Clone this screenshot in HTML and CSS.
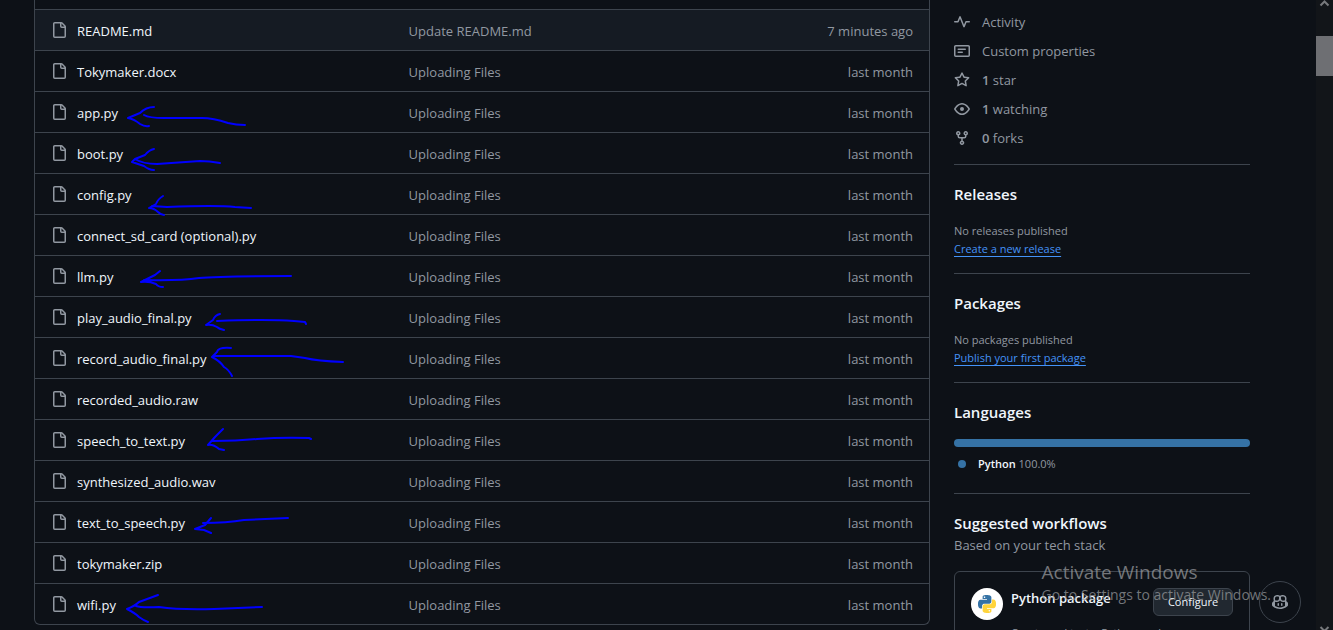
FILE: index.html
```html
<!DOCTYPE html>
<html lang="en">
<head>
<meta charset="utf-8">
<title>Repository files</title>
<link rel="stylesheet" href="styles.css">
</head>
<body>
<svg class="symbols" aria-hidden="true">
  <symbol id="file" viewBox="0 0 16 16"><path d="M2 1.75C2 .784 2.784 0 3.75 0h6.586c.464 0 .909.184 1.237.513l2.914 2.914c.329.328.513.773.513 1.237v9.586A1.75 1.75 0 0 1 13.25 16h-9.5A1.75 1.75 0 0 1 2 14.25Zm1.75-.25a.25.25 0 0 0-.25.25v12.500c0 .138.112.25.25.25h9.500a.25.25 0 0 0 .25-.25V6h-2.750A1.75 1.75 0 0 1 9 4.250V1.500Zm6.750.062V4.250c0 .138.112.25.25.25h2.688l-.011-.013-2.914-2.914-.013-.011Z"/></symbol>
</svg>
<div class="window">
  <div class="page">
    <main class="files">
      <table class="file-table">
        <colgroup><col class="col-name"><col class="col-message"><col class="col-age"></colgroup>
        <tbody>
          <tr class="active"><td><a href="#"><svg class="icon"><use href="#file"/></svg>README.md</a></td><td>Update README.md</td><td>7 minutes ago</td></tr>
          <tr><td><a href="#"><svg class="icon"><use href="#file"/></svg>Tokymaker.docx</a></td><td>Uploading Files</td><td>last month</td></tr>
          <tr><td><a href="#"><svg class="icon"><use href="#file"/></svg>app.py</a></td><td>Uploading Files</td><td>last month</td></tr>
          <tr><td><a href="#"><svg class="icon"><use href="#file"/></svg>boot.py</a></td><td>Uploading Files</td><td>last month</td></tr>
          <tr><td><a href="#"><svg class="icon"><use href="#file"/></svg>config.py</a></td><td>Uploading Files</td><td>last month</td></tr>
          <tr><td><a href="#"><svg class="icon"><use href="#file"/></svg>connect_sd_card (optional).py</a></td><td>Uploading Files</td><td>last month</td></tr>
          <tr><td><a href="#"><svg class="icon"><use href="#file"/></svg>llm.py</a></td><td>Uploading Files</td><td>last month</td></tr>
          <tr><td><a href="#"><svg class="icon"><use href="#file"/></svg>play_audio_final.py</a></td><td>Uploading Files</td><td>last month</td></tr>
          <tr><td><a href="#"><svg class="icon"><use href="#file"/></svg>record_audio_final.py</a></td><td>Uploading Files</td><td>last month</td></tr>
          <tr><td><a href="#"><svg class="icon"><use href="#file"/></svg>recorded_audio.raw</a></td><td>Uploading Files</td><td>last month</td></tr>
          <tr><td><a href="#"><svg class="icon"><use href="#file"/></svg>speech_to_text.py</a></td><td>Uploading Files</td><td>last month</td></tr>
          <tr><td><a href="#"><svg class="icon"><use href="#file"/></svg>synthesized_audio.wav</a></td><td>Uploading Files</td><td>last month</td></tr>
          <tr><td><a href="#"><svg class="icon"><use href="#file"/></svg>text_to_speech.py</a></td><td>Uploading Files</td><td>last month</td></tr>
          <tr><td><a href="#"><svg class="icon"><use href="#file"/></svg>tokymaker.zip</a></td><td>Uploading Files</td><td>last month</td></tr>
          <tr><td><a href="#"><svg class="icon"><use href="#file"/></svg>wifi.py</a></td><td>Uploading Files</td><td>last month</td></tr>
        </tbody>
      </table>
    </main>

    <aside class="sidebar">
      <ul class="stats">
        <li><svg class="icon" viewBox="0 0 16 16"><path d="M0 1.750A.75.75 0 0 1 .75 1h4.253c1.227 0 2.317.59 3 1.501A3.743 3.743 0 0 1 11.006 1h4.245a.75.75 0 0 1 .75.75v10.500a.75.75 0 0 1-.75.75h-4.507a2.250 2.250 0 0 0-1.591.659l-.622.621a.75.75 0 0 1-1.060 0l-.622-.621A2.250 2.250 0 0 0 5.258 13H.75a.75.75 0 0 1-.75-.75Z"/></svg></li>
        <li><svg class="icon" viewBox="0 0 16 16"><path d="M6 2c.306 0 .582.187.696.471L10 10.731l1.304-3.260A.751.751 0 0 1 12 7h3.250a.75.75 0 0 1 0 1.500h-2.742l-1.812 4.528a.751.751 0 0 1-1.392 0L6 4.770 4.696 8.030A.75.75 0 0 1 4 8.500H.75a.75.75 0 0 1 0-1.500h2.742l1.812-4.529A.751.751 0 0 1 6 2Z"/></svg><a href="#">Activity</a></li>
        <li><svg class="icon" viewBox="0 0 16 16"><path d="M0 3.750C0 2.784.784 2 1.750 2h12.500c.966 0 1.750.784 1.750 1.750v8.500A1.750 1.750 0 0 1 14.250 14H1.750A1.750 1.750 0 0 1 0 12.250Zm1.750-.25a.25.25 0 0 0-.25.25v8.500c0 .138.112.25.25.25h12.500a.25.25 0 0 0 .25-.25v-8.500a.25.25 0 0 0-.25-.25ZM3.500 6.250a.75.75 0 0 1 .75-.75h7a.75.75 0 0 1 0 1.500h-7a.75.75 0 0 1-.75-.75Zm.75 2.250h4a.75.75 0 0 1 0 1.500h-4a.75.75 0 0 1 0-1.500Z"/></svg><a href="#">Custom properties</a></li>
        <li><svg class="icon" viewBox="0 0 16 16"><path d="M8 .25a.75.75 0 0 1 .673.418l1.882 3.815 4.210.612a.75.75 0 0 1 .416 1.279l-3.046 2.970.719 4.192a.751.751 0 0 1-1.088.791L8 12.347l-3.766 1.980a.75.75 0 0 1-1.088-.79l.72-4.194L.818 6.374a.75.75 0 0 1 .416-1.280l4.210-.611L7.327.668A.75.75 0 0 1 8 .25Zm0 2.445L6.615 5.500a.75.75 0 0 1-.564.410l-3.097.450 2.240 2.184a.75.75 0 0 1 .216.664l-.528 3.084 2.769-1.456a.75.75 0 0 1 .698 0l2.770 1.456-.530-3.084a.75.75 0 0 1 .216-.664l2.240-2.183-3.096-.450a.75.75 0 0 1-.564-.410L8 2.694Z"/></svg><a href="#"><b>1</b> star</a></li>
        <li><svg class="icon" viewBox="0 0 16 16"><path d="M8 2c1.981 0 3.671.992 4.933 2.078 1.270 1.091 2.187 2.345 2.637 3.023a1.620 1.620 0 0 1 0 1.798c-.450.678-1.367 1.932-2.637 3.023C11.670 13.008 9.981 14 8 14s-3.671-.992-4.933-2.078C1.797 10.830.880 9.576.430 8.898a1.620 1.620 0 0 1 0-1.798c.450-.677 1.367-1.931 2.637-3.022C4.330 2.992 6.019 2 8 2ZM1.679 7.932a.12.12 0 0 0 0 .136c.411.622 1.241 1.750 2.366 2.717C5.176 11.758 6.527 12.500 8 12.500s2.825-.742 3.955-1.715c1.124-.967 1.954-2.096 2.366-2.717a.12.12 0 0 0 0-.136c-.412-.621-1.242-1.750-2.366-2.717C10.824 4.242 9.473 3.500 8 3.500s-2.825.742-3.955 1.715c-1.124.967-1.954 2.096-2.366 2.717ZM8 10a2 2 0 1 1 0-4 2 2 0 0 1 0 4Z"/></svg><a href="#"><b>1</b> watching</a></li>
        <li><svg class="icon" viewBox="0 0 16 16"><path d="M5 5.372v.878c0 .414.336.75.75.75h4.500a.75.75 0 0 0 .75-.75v-.878a2.250 2.250 0 1 1 1.500 0v.878a2.250 2.250 0 0 1-2.250 2.250h-1.500v2.128a2.251 2.251 0 1 1-1.500 0V8.500h-1.500A2.250 2.250 0 0 1 3.500 6.250v-.878a2.250 2.250 0 1 1 1.500 0ZM5 3.250a.75.75 0 1 0-1.500 0 .75.75 0 0 0 1.500 0Zm6.750.75a.75.75 0 1 0 0-1.500.75.75 0 0 0 0 1.500Zm-3 8.750a.75.75 0 1 0-1.500 0 .75.75 0 0 0 1.500 0Z"/></svg><a href="#"><b>0</b> forks</a></li>
      </ul>

      <section class="block">
        <h2>Releases</h2>
        <p class="note">No releases published<br><a class="link" href="#">Create a new release</a></p>
      </section>
      <section class="block">
        <h2>Packages</h2>
        <p class="note">No packages published<br><a class="link" href="#">Publish your first package</a></p>
      </section>
      <section class="block">
        <h2>Languages</h2>
        <div class="language-bar"></div>
        <p class="language"><span class="dot"></span><span><b>Python</b> 100.0%</span></p>
      </section>
      <section class="block">
        <h2 class="tight">Suggested workflows</h2>
        <div class="subtitle">Based on your tech stack</div>
        <div class="workflow">
          <span class="logo">
            <svg viewBox="0 0 24 24"><path fill="#3572a5" d="M14.250.18l.9.200.730.260.590.300.450.320.340.340.250.340.160.330.100.300.040.260.020.200-.010.130V8.500l-.050.630-.130.550-.210.460-.260.380-.300.310-.330.250-.350.190-.350.140-.330.100-.300.070-.260.040-.210.020H8.770l-.690.050-.590.140-.500.220-.410.270-.330.320-.270.350-.200.360-.150.370-.100.350-.070.320-.040.270-.020.210v3.060H3.170l-.210-.030-.280-.070-.320-.120-.350-.180-.360-.260-.360-.360-.350-.460-.320-.590-.280-.730-.210-.880-.140-1.050-.050-1.230.060-1.220.160-1.040.240-.870.320-.710.360-.570.400-.440.420-.330.420-.240.400-.160.360-.100.320-.050.240-.010h.160l.060.010h8.160v-.830H6.180l-.010-2.750-.020-.370.050-.340.110-.310.170-.280.250-.260.310-.230.380-.200.440-.180.510-.150.580-.120.640-.100.710-.060.770-.040.840-.020 1.270.050zm-6.300 1.980l-.230.330-.080.410.080.410.230.340.330.220.410.090.410-.090.330-.220.230-.340.080-.410-.080-.410-.230-.330-.330-.220-.410-.090-.410.090z"/><path fill="#ffd43b" d="M21.040 6.110l.280.060.320.120.350.180.360.270.360.350.350.470.320.590.280.730.210.880.140 1.040.050 1.230-.060 1.230-.160 1.040-.240.860-.320.710-.360.570-.400.450-.420.330-.420.240-.400.160-.360.090-.320.050-.240.020-.160-.010h-8.220v.820h5.840l.010 2.760.020.360-.050.340-.110.310-.170.290-.250.250-.310.240-.380.200-.440.170-.510.150-.580.130-.640.090-.710.070-.770.040-.840.010-1.270-.040-1.070-.140-.900-.200-.730-.250-.590-.300-.450-.330-.340-.340-.250-.340-.160-.330-.100-.300-.040-.250-.020-.200.010-.130v-5.340l.050-.640.130-.540.210-.460.260-.380.300-.320.330-.240.350-.200.350-.140.330-.100.300-.060.260-.040.210-.020.130-.010h5.840l.690-.050.590-.140.500-.210.410-.280.330-.320.270-.350.200-.360.150-.360.100-.350.070-.320.040-.280.020-.210V6.070h2.090z"/><circle cx="15.100" cy="21.100" r="1" fill="#fff"/></svg>
          </span>
          <div class="workflow-body">
            <div class="workflow-head"><b>Python package</b><button type="button" class="configure">Configure</button></div>
            <p>Create and test a Python package on multiple Python versions.</p>
          </div>
        </div>
      </section>
    </aside>
  </div>

  <div class="scrollbar" aria-hidden="true">
    <svg class="arrow" viewBox="0 0 17 8"><path d="M4.500 5.500l4-4 4 4"/></svg>
    <div class="thumb"></div>
    <svg class="arrow bottom" viewBox="0 0 17 8"><path d="M4.500 5l4 4 4-4"/></svg>
  </div>

  <svg class="ink" viewBox="0 0 400 630" aria-hidden="true">
    <path d="M154 107q-8 0-14 6l-12 5q6 1 12 6 5 3 9 2M144 115q5 3 20 3h38q11 0 26 5 8 2 17 2"/>
    <path d="M154 149q-5 1-9 6l-10 4-3 3 12 4q5 4 10 4M135 159q8 5 22 5 28-2 43-3 9 0 20 2"/>
    <path d="M163 196q-5 3-7 8l-7 4q5 0 9 4 3 3 6 3M152 206l15 1q50-2 68 0l16 1"/>
    <path d="M160 271l-5 4-8 4-6 3q8-1 15 2 2 3 7 3M144 280q35 1 55-2 20-2 92-2"/>
    <path d="M220 314q-5 1-7 6l-7 5q6-1 11 2 2 2 7 3M217 321q50-2 77 0l11 1 1 2"/>
    <path d="M231 348q-13-1-14 4l-5 5q8 4 12 10 5 3 8 9M213 356h78l14 2q12 3 38 4"/>
    <path d="M223 429l-8 8-7 8q5-1 11 4l5 1M213 441q24 0 44-2 25-2 52-1l2 1"/>
    <path d="M211 518l-6 7-10 4 9 1 7 3M203 523q24 0 41-3l44-2"/>
    <path d="M158 595l-19 7q-4 4-12 7 8 4 12 8 4 3 9 5M136 606q5 2 23 1 20 3 55 2l48-2"/>
  </svg>

  <button type="button" class="copilot" aria-label="Copilot">
    <svg class="icon" viewBox="0 0 16 16"><path d="M7.998 15.035c-4.562 0-7.873-2.914-7.998-3.749V9.338c.085-.628.677-1.686 1.588-2.065.013-.070.024-.143.036-.218.029-.183.060-.384.126-.612-.201-.508-.254-1.084-.254-1.656 0-.870.128-1.769.693-2.484.579-.733 1.494-1.124 2.724-1.261 1.206-.134 2.262.034 2.944.765.050.053.096.108.139.165.044-.057.094-.112.143-.165.682-.731 1.738-.899 2.944-.765 1.230.137 2.145.528 2.724 1.261.566.715.693 1.614.693 2.484 0 .572-.053 1.148-.254 1.656.066.228.098.429.126.612.012.076.024.148.037.218.924.385 1.522 1.471 1.591 2.095v1.872c0 .766-3.351 3.795-8.002 3.795Zm0-1.485c2.280 0 4.584-1.110 5.002-1.433V7.862l-.023-.116c-.490.210-1.075.291-1.727.291-1.146 0-2.059-.327-2.710-.991A3.222 3.222 0 0 1 8 6.303a3.240 3.240 0 0 1-.544.743c-.650.664-1.563.991-2.710.991-.652 0-1.236-.081-1.727-.291l-.023.116v4.255c.419.323 2.722 1.433 5.002 1.433ZM6.762 2.830c-.193-.206-.637-.413-1.682-.297-1.019.113-1.479.404-1.713.700-.247.312-.369.789-.369 1.554 0 .793.129 1.171.308 1.371.162.181.519.379 1.442.379.853 0 1.339-.235 1.638-.540.315-.322.527-.827.617-1.553.117-.935-.037-1.395-.241-1.614Zm4.155-.297c-1.044-.116-1.488.091-1.681.297-.204.219-.359.679-.242 1.614.091.726.303 1.231.618 1.553.299.305.784.540 1.638.540.922 0 1.280-.198 1.442-.379.179-.200.308-.578.308-1.371 0-.765-.123-1.242-.370-1.554-.233-.296-.693-.587-1.713-.700Z"/><path d="M6.250 9.037a.75.75 0 0 1 .75.75v1.501a.75.75 0 0 1-1.500 0V9.787a.75.75 0 0 1 .75-.75Zm4.250.75v1.501a.75.75 0 0 1-1.500 0V9.787a.75.75 0 0 1 1.500 0Z"/></svg>
  </button>
  <div class="watermark"><div class="watermark-title">Activate Windows</div><div>Go to Settings to activate Windows.</div></div>
</div>
</body>
</html>
```
FILE: styles.css
```css
* { box-sizing: border-box; }
body {
  margin: 0;
  background: #0d1117;
  color: #9198a1;
  font: 13px/20px "Open Sans", "Noto Sans", sans-serif;
}
a { color: inherit; text-decoration: none; }
b { font-weight: 600; }
p { margin: 0; }
button { font: inherit; }
.symbols { position: absolute; width: 0; height: 0; }
.icon { width: 16px; height: 16px; fill: #9198a1; flex: none; }

.window { position: relative; display: flex; height: 100vh; overflow: hidden; }
.page {
  flex: 1;
  display: grid;
  grid-template-columns: minmax(0, 1fr) 296px;
  align-items: start;
  gap: 24px;
  padding: 0 66px 0 34px;
}

.files {
  padding-top: 9px;
  border: 1px solid #3d444d;
  border-top: 0;
  border-radius: 0 0 6px 6px;
}
.file-table { width: 100%; table-layout: fixed; border-collapse: separate; border-spacing: 0; }
.col-name { width: 40%; }
.col-age { width: 136px; }
.file-table td { height: 41px; padding: 2px 16px 0; border-top: 1px solid #3d444d; }
.file-table td:last-child { text-align: right; }
.file-table td a { display: flex; align-items: center; gap: 10px; color: #f0f6fc; }
.file-table .icon { margin-bottom: 2px; }
.active td { background: #151b23; }

.sidebar { margin-top: -17px; }
.stats {
  display: grid;
  gap: 9px;
  margin: 0;
  padding: 0 0 16px;
  list-style: none;
}
.stats li { display: flex; align-items: center; gap: 12px; height: 20px; }
.block { padding: 18px 0 15px; border-top: 1px solid #3d444d; }
.block h2 { margin: 0 0 16px; color: #f0f6fc; font-size: 15px; line-height: 22px; font-weight: 600; }
.block h2.tight { margin: 0 0 1px; }
.block p { font-size: 11px; line-height: 18px; }
.note { padding-top: 1px; }
.link { color: #4493f8; text-decoration: underline; text-underline-offset: 3px; }
.language-bar { height: 8px; border-radius: 6px; background: #3572a5; }
.block .language { display: flex; align-items: center; gap: 12px; padding: 8px 0 5px 4px; }
.language b { color: #f0f6fc; }
.dot { width: 8px; height: 8px; border-radius: 50%; background: #3572a5; }
.workflow {
  display: flex;
  gap: 8px;
  margin-top: 16px;
  padding: 16px;
  border: 1px solid #3d444d;
  border-radius: 6px;
}
.logo {
  display: grid;
  place-items: center;
  flex: none;
  width: 32px;
  height: 32px;
  border-radius: 50%;
  background: #fff;
}
.logo svg { width: 18px; height: 18px; }
.workflow-body { flex: 1; }
.workflow-head { display: flex; align-items: start; justify-content: space-between; color: #f0f6fc; margin-bottom: 8px; }
.configure {
  height: 28px;
  padding: 0 12px;
  min-width: 80px;
  border: 1px solid #3d444d;
  border-radius: 6px;
  background: #212830;
  color: #f0f6fc;
  font-size: 11px;
}

.scrollbar { display: flex; flex-direction: column; width: 17px; background: #121519; }
.arrow { width: 17px; height: 8px; fill: none; stroke: #77797c; stroke-width: 2; }
.arrow.bottom { height: 8px; margin-top: auto; }
.thumb { height: 40px; margin-top: 28px; background: #6e6f73; }

.ink {
  position: absolute;
  top: 0;
  left: 0;
  width: 400px;
  height: 630px;
  fill: none;
  stroke: #00f;
  stroke-width: 2;
  stroke-linecap: round;
  stroke-linejoin: round;
  pointer-events: none;
}
.copilot {
  position: absolute;
  right: 32px;
  bottom: 7px;
  display: grid;
  place-items: center;
  width: 42px;
  height: 42px;
  padding: 0;
  border: 1px solid #3d444d;
  border-radius: 50%;
  background: #0d1117;
}
.watermark {
  position: absolute;
  right: 62px;
  bottom: 25px;
  color: rgba(150, 152, 155, .75);
  font-size: 14px;
  pointer-events: none;
}
.watermark-title { font-size: 19px; line-height: 26px; }
```
